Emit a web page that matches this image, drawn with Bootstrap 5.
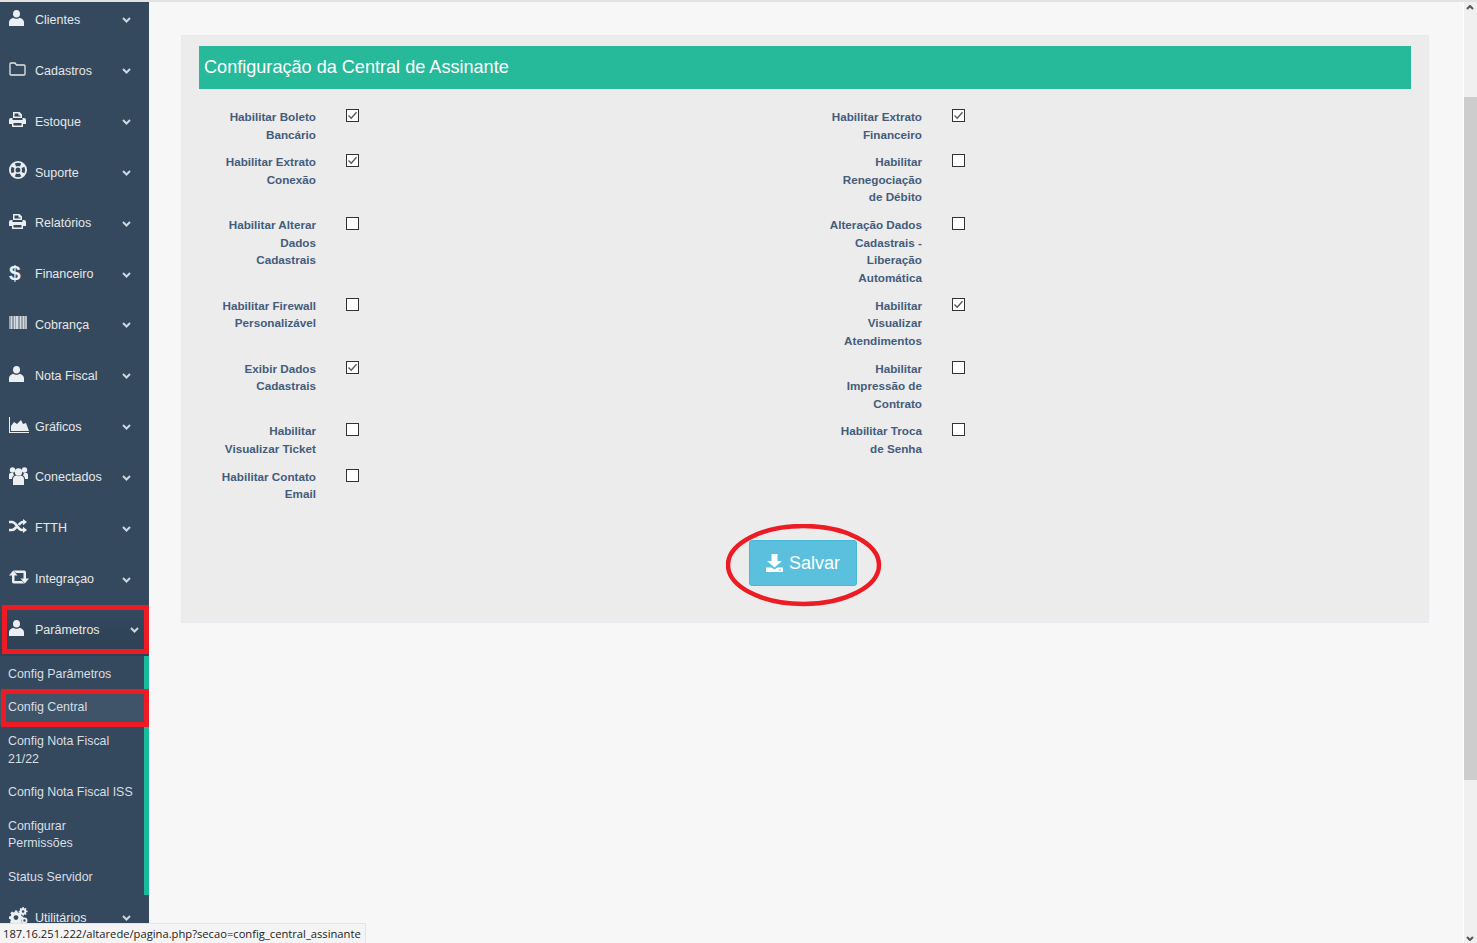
<!DOCTYPE html>
<html lang="pt-BR">
<head>
<meta charset="utf-8">
<title>Configuração da Central de Assinante</title>
<link rel="stylesheet" href="https://cdn.jsdelivr.net/npm/bootstrap@5.3.0/dist/css/bootstrap.min.css">
<style>
html,body{height:100%;overflow:hidden}
body{font-family:"Liberation Sans",Arial,sans-serif;font-size:13px;background:#f7f7f7;border-top:2px solid #e2e2e2;position:relative}
.shell{height:941px}
.side{width:149px;background:#34495e;overflow:hidden;flex:none}
.menu{margin-top:-7px;list-style:none;padding:0}
.mitem{height:50.83px;color:#e7e7e7;font-size:12.5px;padding-left:9px}
.mitem .ic{width:26px;flex:none;display:flex;margin-top:-5px}
.mitem .ic svg{fill:#eceff1;display:block}
.mitem .lb{flex:1 1 auto}
.chev{width:9px;height:6px;margin-right:18px;flex:none;fill:none;stroke:#cfd6dd;stroke-width:2}
.mitem.opened{background:linear-gradient(#34495e,#2e4155)}
.mitem.opened .chev{margin-right:10px}
.dollar{font:bold 21px/1 "Liberation Sans",sans-serif;color:#eceff1}
.submenu{list-style:none;margin:0 0 -2px;padding:2px 0 0;border-right:5px solid #1abb9c;width:149px}
.submenu li{font-size:12.4px;line-height:17.6px;padding:8px 8px;color:#d9dee3}
.submenu li.cur{background:#3f5469;margin-right:-5px}
.content{min-width:0}
.panel-box{margin:33px 34px 0 32px;background:#ececec;border:1px solid #e6e9ed;height:588px;padding:10px 17px 0}
.headbar{background:#26b99a;color:#fff;font-size:18.1px;height:43px;line-height:43px;padding-left:5px;margin-bottom:20px}
.fcol{width:606px;display:flex;padding:0 0 11.1px 22px;align-items:flex-start}
.flabel{width:95px;text-align:right;font-weight:700;font-size:11.7px;line-height:17.6px;color:#445c7c;flex:none;margin:-1px 30px 0 0}
.box{appearance:none;width:13px;height:13px;border:1px solid #333;background:#fff center/11px 11px no-repeat;margin:0;flex:none;display:block}
.box:checked{background-image:url("data:image/svg+xml,%3Csvg xmlns='http://www.w3.org/2000/svg' viewBox='0 0 11 11'%3E%3Cpath d='M1.500 5.500 4.200 8.200 9.500 2.200' fill='none' stroke='%23555' stroke-width='1.300'/%3E%3C/svg%3E")}
.actions{padding:26.3px 4px 0 0}
.save{background:#5bc0de;border:1px solid #46b8da;color:#fff;font-size:18px;width:108px;height:46px;border-radius:3px;padding:0;gap:6px}
.save:hover{background:#5bc0de;color:#fff}
.save svg{fill:#fff}
.trackbar{width:14px;background:#f0f0f0;border-left:1px solid #fff;flex:none;height:100%;padding-top:95px}
.trackthumb{height:683px;background:#cdcdcd}
.arr{position:absolute;right:3px;width:8px;height:5px;fill:none;stroke:#555;stroke-width:2}
.redbox{position:absolute;border:5px solid #ed1c24;pointer-events:none}
.oval{position:absolute;left:726px;top:522px;pointer-events:none}
.statusline{position:absolute;left:0;bottom:0;height:20px;width:366px;background:#f4f4f4;border:1px solid #e4e4e4;border-left:0;border-bottom:0;font:11.2px/19px "Open Sans",sans-serif;padding-left:3px;color:#222;white-space:nowrap}
.tick{position:absolute;top:-1px;width:1px;height:1px;background:#999}
</style>
</head>
<body>
<svg width="0" height="0" class="position-absolute">
<defs>
<symbol id="i-user" viewBox="0 0 15 16"><ellipse cx="7.500" cy="3.800" rx="3.500" ry="3.800"/><path d="M0 16v-3.800C0 10 1.800 8.800 4.300 7.800c1.500 1.400 4.900 1.400 6.400 0 2.500 1 4.300 2.200 4.300 4.400V16z"/></symbol>
<symbol id="i-folder" viewBox="0 0 17 14"><path d="M2 1h4l1.500 2H15a1 1 0 0 1 1 1v8a1 1 0 0 1-1 1H2a1 1 0 0 1-1-1V2a1 1 0 0 1 1-1z" fill="none" stroke="#e7e7e7" stroke-width="1.300"/></symbol>
<symbol id="i-print" viewBox="0 0 17 15"><path d="M4 0h6.500L13 2.500V6H4zM5.500 1.500v3h6V3.500h-2v-2z" fill-rule="evenodd"/><path d="M2 6h1.500V8h10V6H15a2 2 0 0 1 2 2v4h-3v3H3v-3H0V8a2 2 0 0 1 2-2zM4.500 11v2.500h8V11z" fill-rule="evenodd"/></symbol>
<symbol id="i-ring" viewBox="0 0 18 18"><path fill-rule="evenodd" d="M9 0a9 9 0 1 1 0 18A9 9 0 0 1 9 0zM5.800 2.600l1.300 2.800a4.200 4.200 0 0 1 3.800 0l1.300-2.800a7.200 7.200 0 0 0-6.400 0zM2.600 5.800a7.200 7.200 0 0 0 0 6.400l2.800-1.300a4.200 4.200 0 0 1 0-3.800zM15.400 5.800l-2.800 1.300a4.200 4.200 0 0 1 0 3.800l2.800 1.300a7.200 7.200 0 0 0 0-6.400zM5.800 15.400a7.200 7.200 0 0 0 6.400 0l-1.300-2.800a4.200 4.200 0 0 1-3.800 0zM9 6.500a2.500 2.500 0 1 0 0 5 2.500 2.500 0 0 0 0-5z"/></symbol>
<symbol id="i-chart" viewBox="0 0 20 16"><path d="M0 0h1v15h19v1H0z"/><path d="M2 14V9l3-4 3 2 4-4 2 4 3-1 3 8z"/></symbol>
<symbol id="i-users" viewBox="0 0 19 19"><circle cx="3.500" cy="4" r="2.700"/><circle cx="15.500" cy="4" r="2.700"/><circle cx="9.500" cy="6" r="3.700"/><path d="M0 13V9c0-1.500 1-2 2-2h2l1 2.500C4 10 3 11 3 13zM19 13V9c0-1.500-1-2-2-2h-2l-1 2.500c1 .5 2 1.500 2 3.500z"/><path d="M4 19v-6c0-2 2-3.500 3.500-3.500 1 1 3 1 4 0C13 9.500 15 11 15 13v6z"/></symbol>
<symbol id="i-random" viewBox="0 0 18 14"><path d="M0 3h3c4.500 0 5.500 8 10 8h1.500M0 11h3c2 0 3.200-1.500 4.200-3M9.800 6C10.800 4.500 12 3 14 3h.5" fill="none" stroke="#eceff1" stroke-width="2.600"/><path d="M14 0l4 3-4 3.200zM14 7.800l4 3.200-4 3z"/></symbol>
<symbol id="i-retweet" viewBox="0 0 20 14"><path d="M0 5.500L4.200 .5 8.500 5.500H5.500V11H13l2.500 2.500H4.700A1.700 1.700 0 0 1 3 11.800V5.500z"/><path d="M20 8.500l-4.200 5-4.300-5h3V3H7L4.500 .5h10.800A1.700 1.700 0 0 1 17 2.200V8.500z"/></symbol>
<symbol id="i-cogs" viewBox="0 0 19 17"><path fill-rule="evenodd" d="M5.800 3.500h2.400l.4 1.800 1.200.5 1.600-1 1.700 1.700-1 1.600.5 1.200 1.800.4v2.400l-1.800.4-.5 1.200 1 1.600-1.700 1.700-1.600-1-1.200.5-.4 1.800H5.800l-.4-1.800-1.200-.5-1.600 1L.9 15l1-1.600-.5-1.200L0 11.800V9.400l1.800-.4.500-1.200-1-1.600L3 4.500l1.600 1 1.200-.5zM7 8.200a2.400 2.400 0 1 0 0 4.800 2.400 2.400 0 0 0 0-4.800z"/><path fill-rule="evenodd" d="M15 0h1.200l.3 1.200.7.300 1-.6.800.9-.6 1 .3.700 1.300.300v1.200l-1.300.3-.3.700.6 1-.8.900-1-.6-.7.300-.3 1.200H15l-.3-1.200-.7-.3-1 .6-.8-.9.600-1-.3-.7-1.300-.3V3.900l1.300-.3.300-.7-.6-1 .8-.9 1 .6.7-.3zM15.600 3.200a1.300 1.300 0 1 0 0 2.600 1.300 1.300 0 0 0 0-2.600z" transform="translate(-1.500 0)"/><path fill-rule="evenodd" d="M15.500 10.500a3 3 0 1 1 0 6 3 3 0 0 1 0-6zM15.500 12.300a1.200 1.200 0 1 0 0 2.400 1.200 1.200 0 0 0 0-2.400z"/></symbol>
<symbol id="i-bar" viewBox="0 0 18 13"><rect width="18" height="13" fill="#9aa4b0"/><path d="M2 0h1v13H2zM5 0h1v13H5zM7 0h2v13H7zM11 0h1v13h-1zM14 0h1v13h-1zM16.500 0h1v13h-1z" fill="#d4dbe0"/><path d="M3.500 0h1v13h-1zM9.500 0h1v13h-1z" fill="#7f90a8"/><path d="M12.500 0h1v13h-1z" fill="#a99f8a"/></symbol>
<symbol id="i-down" viewBox="0 0 17 18"><path d="M5.500 0h6v7h4.500l-7.500 6.500L1 7h4.500z"/><path d="M0 13.500h5.500l3 2 3-2H17V18H0zM13 15.500v1h2v-1z" fill-rule="evenodd"/></symbol>
<symbol id="i-chev" viewBox="0 0 9 6"><path d="M1 1l3.500 3.500L8 1"/></symbol>
</defs>
</svg>

<div class="shell d-flex">
<aside class="side">
<ul class="menu mb-0">
<li class="mitem d-flex align-items-center"><span class="ic"><svg width="15" height="16"><use href="#i-user"/></svg></span><span class="lb">Clientes</span><svg class="chev"><use href="#i-chev"/></svg></li>
<li class="mitem d-flex align-items-center"><span class="ic"><svg width="17" height="14"><use href="#i-folder"/></svg></span><span class="lb">Cadastros</span><svg class="chev"><use href="#i-chev"/></svg></li>
<li class="mitem d-flex align-items-center"><span class="ic"><svg width="17" height="15"><use href="#i-print"/></svg></span><span class="lb">Estoque</span><svg class="chev"><use href="#i-chev"/></svg></li>
<li class="mitem d-flex align-items-center"><span class="ic"><svg width="18" height="18"><use href="#i-ring"/></svg></span><span class="lb">Suporte</span><svg class="chev"><use href="#i-chev"/></svg></li>
<li class="mitem d-flex align-items-center"><span class="ic"><svg width="17" height="15"><use href="#i-print"/></svg></span><span class="lb">Relatórios</span><svg class="chev"><use href="#i-chev"/></svg></li>
<li class="mitem d-flex align-items-center"><span class="ic dollar">$</span><span class="lb">Financeiro</span><svg class="chev"><use href="#i-chev"/></svg></li>
<li class="mitem d-flex align-items-center"><span class="ic"><svg width="18" height="13"><use href="#i-bar"/></svg></span><span class="lb">Cobrança</span><svg class="chev"><use href="#i-chev"/></svg></li>
<li class="mitem d-flex align-items-center"><span class="ic"><svg width="15" height="16"><use href="#i-user"/></svg></span><span class="lb">Nota Fiscal</span><svg class="chev"><use href="#i-chev"/></svg></li>
<li class="mitem d-flex align-items-center"><span class="ic"><svg width="20" height="16"><use href="#i-chart"/></svg></span><span class="lb">Gráficos</span><svg class="chev"><use href="#i-chev"/></svg></li>
<li class="mitem d-flex align-items-center"><span class="ic"><svg width="19" height="19"><use href="#i-users"/></svg></span><span class="lb">Conectados</span><svg class="chev"><use href="#i-chev"/></svg></li>
<li class="mitem d-flex align-items-center"><span class="ic"><svg width="18" height="14"><use href="#i-random"/></svg></span><span class="lb">FTTH</span><svg class="chev"><use href="#i-chev"/></svg></li>
<li class="mitem d-flex align-items-center"><span class="ic"><svg width="20" height="14"><use href="#i-retweet"/></svg></span><span class="lb">Integraçao</span><svg class="chev"><use href="#i-chev"/></svg></li>
<li class="mitem opened d-flex align-items-center"><span class="ic"><svg width="15" height="16"><use href="#i-user"/></svg></span><span class="lb">Parâmetros</span><svg class="chev"><use href="#i-chev"/></svg></li>
<li>
<ul class="submenu">
<li>Config Parâmetros</li>
<li class="cur">Config Central</li>
<li>Config Nota Fiscal<br>21/22</li>
<li>Config Nota Fiscal ISS</li>
<li>Configurar<br>Permissões</li>
<li>Status Servidor</li>
</ul>
</li>
<li class="mitem d-flex align-items-center"><span class="ic"><svg width="19" height="17"><use href="#i-cogs"/></svg></span><span class="lb">Utilitários</span><svg class="chev"><use href="#i-chev"/></svg></li>
</ul>
</aside>

<main class="content flex-grow-1">
<section class="panel-box">
<div class="headbar">Configuração da Central de Assinante</div>
<form>
<div class="d-flex"><div class="fcol"><label class="flabel">Habilitar Boleto Bancário</label><input class="box" type="checkbox" checked></div><div class="fcol"><label class="flabel">Habilitar Extrato Financeiro</label><input class="box" type="checkbox" checked></div></div>
<div class="d-flex"><div class="fcol"><label class="flabel">Habilitar Extrato Conexão</label><input class="box" type="checkbox" checked></div><div class="fcol"><label class="flabel">Habilitar Renegociação de Débito</label><input class="box" type="checkbox"></div></div>
<div class="d-flex"><div class="fcol"><label class="flabel">Habilitar Alterar Dados Cadastrais</label><input class="box" type="checkbox"></div><div class="fcol"><label class="flabel">Alteração Dados Cadastrais - Liberação Automática</label><input class="box" type="checkbox"></div></div>
<div class="d-flex"><div class="fcol"><label class="flabel">Habilitar Firewall Personalizável</label><input class="box" type="checkbox"></div><div class="fcol"><label class="flabel">Habilitar Visualizar Atendimentos</label><input class="box" type="checkbox" checked></div></div>
<div class="d-flex"><div class="fcol"><label class="flabel">Exibir Dados Cadastrais</label><input class="box" type="checkbox" checked></div><div class="fcol"><label class="flabel">Habilitar Impressão de Contrato</label><input class="box" type="checkbox"></div></div>
<div class="d-flex"><div class="fcol"><label class="flabel">Habilitar Visualizar Ticket</label><input class="box" type="checkbox"></div><div class="fcol"><label class="flabel">Habilitar Troca de Senha</label><input class="box" type="checkbox"></div></div>
<div class="d-flex"><div class="fcol"><label class="flabel">Habilitar Contato Email</label><input class="box" type="checkbox"></div></div>
<div class="d-flex justify-content-center actions"><button type="button" class="btn save d-inline-flex align-items-center justify-content-center"><svg width="17" height="18"><use href="#i-down"/></svg>Salvar</button></div>
</form>
</section>
</main>
<div class="trackbar"><div class="trackthumb"></div></div>
</div>

<i class="tick" style="left:369px"></i><i class="tick" style="left:736px"></i><i class="tick" style="left:1105px"></i>
<svg class="arr" style="top:3px"><path d="M1 4l3-3 3 3"/></svg>
<svg class="arr" style="bottom:2px"><path d="M1 1l3 3 3-3"/></svg>
<div class="redbox" style="left:2px;top:603px;width:147px;height:49px"></div>
<div class="redbox" style="left:1px;top:687px;width:148px;height:38px"></div>
<svg class="oval" width="156" height="84"><ellipse cx="77.500" cy="41" rx="75.500" ry="39" fill="none" stroke="#ed1c24" stroke-width="4.500"/></svg>
<div class="statusline">187.16.251.222/altarede/pagina.php?secao=config_central_assinante</div>
</body>
</html>
